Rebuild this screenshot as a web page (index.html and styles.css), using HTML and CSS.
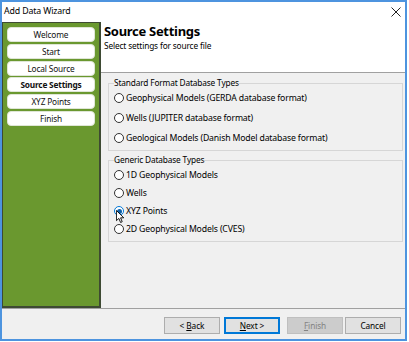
FILE: index.html
```html
<!DOCTYPE html>
<html>
<head>
<meta charset="utf-8">
<link rel="stylesheet" href="styles.css">
</head>
<body>
<div class="window">
  <div class="titlebar">
    <span class="title">Add Data Wizard</span>
    <svg class="close" width="10" height="10" viewBox="0 0 10 10"><path d="M0.5 0.5 L9.5 9.5 M9.5 0.5 L0.5 9.5" stroke="#222" stroke-width="1" fill="none"/></svg>
  </div>
  <div class="main">
    <nav class="steps">
      <div class="step">Welcome</div>
      <div class="step">Start</div>
      <div class="step">Local Source</div>
      <div class="step current">Source Settings</div>
      <div class="step">XYZ Points</div>
      <div class="step">Finish</div>
    </nav>
    <div class="pane">
      <header class="head">
        <h1>Source Settings</h1>
        <p>Select settings for source file</p>
      </header>
      <div class="content">
        <fieldset class="group g1">
          <legend>Standard Format Database Types</legend>
          <label class="opt"><span class="radio"></span>Geophysical Models (GERDA database format)</label>
          <label class="opt"><span class="radio"></span>Wells (JUPITER database format)</label>
          <label class="opt"><span class="radio"></span>Geological Models (Danish Model database format)</label>
        </fieldset>
        <fieldset class="group g2">
          <legend>Generic Database Types</legend>
          <label class="opt"><span class="radio"></span>1D Geophysical Models</label>
          <label class="opt"><span class="radio"></span>Wells</label>
          <label class="opt"><span class="radio checked"></span>XYZ Points
            <svg class="cursor" width="9" height="14" viewBox="0 0 11 17"><path d="M0.5 0.5 L0.5 13 L3.5 10.2 L5.6 15.2 L7.6 14.3 L5.6 9.5 L9.5 9.5 Z" fill="#fff" stroke="#000" stroke-width="1.1" stroke-linejoin="round"/></svg>
          </label>
          <label class="opt"><span class="radio"></span>2D Geophysical Models (CVES)</label>
        </fieldset>
      </div>
    </div>
  </div>
  <footer class="foot">
    <button class="btn back">&lt; <u>B</u>ack</button>
    <button class="btn next"><u>N</u>ext &gt;</button>
    <button class="btn finish" disabled><u>F</u>inish</button>
    <button class="btn cancel">Cancel</button>
  </footer>
</div>
</body>
</html>
```
FILE: styles.css
```css
* { box-sizing: border-box; }
html, body { margin: 0; padding: 0; background: #ffffff; }
body { font-family: "Noto Sans", "Open Sans", sans-serif; color: #000; }

.window {
  width: 407px;
  height: 341px;
  border: 2px solid #4d94df;
  background: #f0f0f0;
  display: flex;
  flex-direction: column;
}

.titlebar {
  height: 20px;
  background: #ffffff;
  display: flex;
  align-items: center;
  justify-content: space-between;
  padding: 0 4px 0 2px;
}
.title { font-size: 8.8px; line-height: 12px; letter-spacing: -0.15px; margin-top: -2px; }
.close { margin-top: -1px; }

.main {
  height: 286px;
  display: flex;
}

.steps {
  width: 99px;
  background: #6a982f;
  border: 1px solid #3e4a33;
  border-right-width: 2px;
  border-bottom-width: 2px;
  padding: 4px 4px 0 4px;
  display: flex;
  flex-direction: column;
  gap: 1.8px;
}
.step {
  height: 15px;
  background: #ffffff;
  border: 1px solid #dfe6d6;
  border-radius: 4px;
  font-size: 8.3px;
  letter-spacing: -0.15px;
  line-height: 13px;
  text-align: center;
  color: #111;
}
.step.current { font-weight: bold; letter-spacing: -0.2px; }

.pane {
  flex: 1;
  display: flex;
  flex-direction: column;
}

.head {
  height: 51px;
  background: #ffffff;
  border-bottom: 1px solid #a0a0a0;
  padding: 1px 0 0 3px;
}
.head h1 {
  margin: 0;
  font-size: 13px;
  letter-spacing: -0.3px;
  line-height: 17px;
  font-weight: bold;
}
.head p {
  margin: 0;
  font-size: 8.3px;
  letter-spacing: -0.15px;
  line-height: 12px;
}

.content {
  padding: 5px 2px 0 7px;
}

.group {
  margin: 0;
  border: 1px solid #d6d6d6;
  padding: 0 5px 2px 5px;
  min-inline-size: 0;
}
.group legend {
  padding: 0;
  font-size: 8.3px;
  letter-spacing: -0.15px;
  line-height: 10px;
}
.g2 { margin-top: 4px; padding-top: 1px; padding-bottom: 3px; }

.opt {
  display: flex;
  align-items: center;
  gap: 2px;
  height: 20px;
  font-size: 8.7px;
  letter-spacing: -0.15px;
  position: relative;
}
.g2 .opt { height: 18px; }

.radio {
  width: 10px;
  height: 10px;
  border: 1px solid #333;
  border-radius: 50%;
  background: #fff;
  display: flex;
  align-items: center;
  justify-content: center;
  flex: none;
}
.radio.checked { border-color: #0078d7; }
.radio.checked::after {
  content: "";
  width: 5px;
  height: 5px;
  border-radius: 50%;
  background: #0c5fa8;
}

.cursor {
  position: absolute;
  left: 2px;
  top: 8px;
}

.foot {
  flex: 1;
  border-top: 1px solid #a0a0a0;
  display: flex;
  justify-content: flex-end;
  align-items: flex-start;
  padding: 8px 4px 0 0;
}
.btn {
  width: 56px;
  height: 17px;
  margin: 0;
  padding: 0;
  font-family: inherit;
  font-size: 8.3px;
  letter-spacing: -0.1px;
  line-height: 15px;
  background: #e1e1e1;
  border: 1px solid #adadad;
  color: #000;
}
.btn u { text-decoration: underline; }
.next { margin-left: 4px; border: 1px solid #0078d7; box-shadow: inset 0 0 0 1px #0078d7; }
.finish { margin-left: 7px; background: #cccccc; border-color: #bfbfbf; color: #838383; }
.cancel { margin-left: 2px; }
```
